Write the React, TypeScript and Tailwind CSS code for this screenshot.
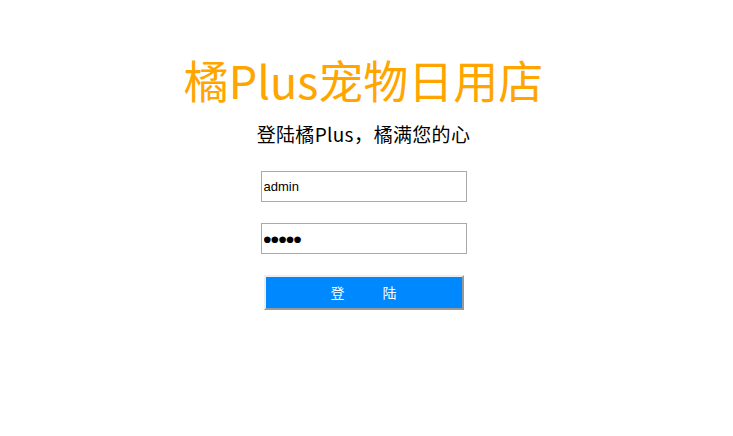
import { useState } from "react";

export default function App() {
    const [user, setUser] = useState("admin");

    return (
        <div
            className="w-[727px] bg-white flex flex-col items-center pt-[49px]"
            style={{ fontFamily: '"Noto Sans CJK SC", "Noto Sans", sans-serif' }}
        >
            {/* TITLE */}
            <h1 className="text-[45px] leading-[62px] text-[#ffa500]">
                橘Plus宠物日用店
            </h1>
            <p className="text-[19px] leading-[26px] text-black mt-[10px] tracking-[0.3px]">
                登陆橘Plus<span className="inline-block w-[20px] text-center">，</span>橘满您的心
            </p>

            {/* FORM */}
            <form
                className="flex flex-col items-center mt-[24px]"
                onSubmit={(e) => e.preventDefault()}
            >
                <input
                    type="text"
                    value={user}
                    onChange={(e) => setUser(e.target.value)}
                    className="w-[206px] h-[31px] border border-[#a9a9a9] px-[2px] text-[13px] font-['Liberation_Sans',sans-serif] text-black outline-none"
                />
                {/* password shown with big dots */}
                <input
                    type="text"
                    readOnly
                    value="●●●●●"
                    className="w-[206px] h-[31px] border border-[#a9a9a9] px-[2px] text-[8.7px] font-['DejaVu_Sans',sans-serif] text-black outline-none mt-[21px]"
                />
                <button
                    type="submit"
                    className="w-[200px] h-[35px] mt-[21px] bg-[#0088ff] text-white text-[14px] flex items-center justify-center gap-[38px] border-2 border-t-[#eeeeee] border-l-[#eeeeee] border-r-[#999999] border-b-[#999999]"
                >
                    <span>登</span>
                    <span>陆</span>
                </button>
            </form>
            <div className="h-[127px]" />
        </div>
    );
}
